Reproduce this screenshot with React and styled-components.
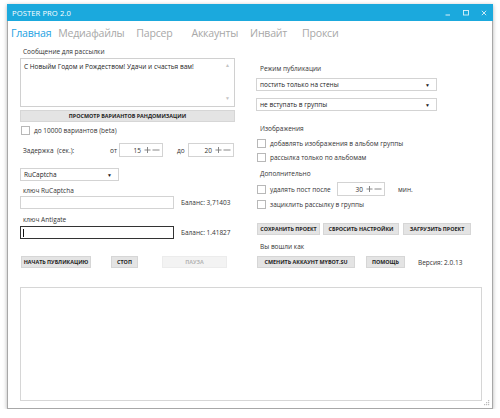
import React from "react";
import styled, { createGlobalStyle } from "styled-components";

const Global = createGlobalStyle`
  html, body { margin: 0; padding: 0; background: #ffffff; }
  body { font-family: "Open Sans", "Noto Sans", sans-serif; color: #333; }
  * { box-sizing: border-box; }
`;

const Window = styled.div`
  position: relative;
  margin: 4px 0 0 7px;
  width: 486px;
  height: 405px;
  background: #fff;
  border: 1px solid #a8a8a8;
  border-top: none;
  box-shadow: 0 1px 4px rgba(0, 0, 0, 0.3);
  display: flex;
  flex-direction: column;
`;

const TitleBar = styled.div`
  height: 17px;
  margin: 0 -1px;
  background: #1ba9dd;
  display: flex;
  align-items: center;
  padding: 0 6px 0 5px;
  color: #fff;
  font-size: 7.6px;
`;

const Title = styled.div`
  flex: 1;
  letter-spacing: 0.1px;
`;

const Controls = styled.div`
  display: flex;
  align-items: center;
  gap: 12px;
  opacity: 0.85;
`;

const Tabs = styled.div`
  height: 23px;
  display: flex;
  align-items: center;
  padding-left: 3px;
`;

const Tab = styled.div`
  font-size: 10.6px;
  letter-spacing: -0.25px;
  font-weight: 400;
  color: ${(p) => (p.$active ? "#1ba1e2" : "#a8a8a8")};
  margin-right: ${(p) => p.$gap}px;
  white-space: nowrap;
`;

const Main = styled.div`
  padding: 3px 10px 0 12px;
  display: grid;
  grid-template-columns: 215px 1fr;
  column-gap: 21px;
`;

const Column = styled.div`
  display: flex;
  flex-direction: column;
`;

const Label = styled.div`
  font-size: 6.5px;
  line-height: 10px;
  height: 10px;
  color: #333;
  padding-left: ${(p) => p.$indent ?? 3}px;
  margin-top: ${(p) => p.$mt || 0}px;
  white-space: nowrap;
`;

const TextArea = styled.div`
  position: relative;
  margin-top: 1px;
  height: 49px;
  border: 1px solid #d0d0d0;
  padding: 3px 3px;
  font-size: 6.5px;
  line-height: 9px;
  color: #222;
`;

const Scroll = styled.div`
  position: absolute;
  right: 4px;
  top: 4px;
  bottom: 5px;
  display: flex;
  flex-direction: column;
  justify-content: space-between;
  color: #c4c4c4;
  font-size: 5px;
  line-height: 5px;
`;

const Btn = styled.div`
  height: 12px;
  width: ${(p) => (p.$w ? `${p.$w}px` : "auto")};
  margin-left: ${(p) => p.$ml || 0}px;
  margin-top: ${(p) => p.$mt || 0}px;
  background: ${(p) => (p.$disabled ? "#f3f3f3" : "#e4e4e4")};
  border: 1px solid ${(p) => (p.$disabled ? "#ececec" : "#d6d6d6")};
  color: ${(p) => (p.$disabled ? "#b5b5b5" : "#222")};
  font-size: 5.4px;
  font-weight: 700;
  text-transform: uppercase;
  display: flex;
  align-items: center;
  justify-content: center;
  white-space: nowrap;
  flex-shrink: 0;
`;

const Row = styled.div`
  display: flex;
  align-items: center;
  height: ${(p) => p.$h || 10}px;
  margin-top: ${(p) => p.$mt || 0}px;
`;

const Box = styled.div`
  width: 9px;
  height: 9px;
  border: 1px solid #b8b8b8;
  background: #fff;
  margin-left: 1px;
  flex-shrink: 0;
`;

const Text = styled.div`
  font-size: 6.5px;
  color: #333;
  white-space: nowrap;
  margin-left: ${(p) => p.$ml || 0}px;
  width: ${(p) => (p.$w ? `${p.$w}px` : "auto")};
  padding-left: ${(p) => p.$pl || 0}px;
  flex-shrink: 0;
`;

const Spin = styled.div`
  width: ${(p) => p.$w}px;
  height: 14px;
  border: 1px solid #d3d3d3;
  display: flex;
  align-items: center;
  justify-content: flex-end;
  padding-right: 2px;
  font-size: 6.5px;
  color: #333;
  flex-shrink: 0;
  margin-left: ${(p) => p.$ml || 0}px;
`;

const SpinVal = styled.span`
  margin-right: 3px;
`;

const Select = styled.div`
  width: ${(p) => (p.$w ? `${p.$w}px` : "auto")};
  height: 13px;
  margin-top: ${(p) => p.$mt || 0}px;
  border: 1px solid #d3d3d3;
  display: flex;
  align-items: center;
  justify-content: space-between;
  padding: 0 6px 0 3px;
  font-size: 6.5px;
  color: #222;
`;

const Arrow = styled.span`
  font-size: 5px;
  color: #222;
`;

const Input = styled.div`
  width: 154px;
  height: 13px;
  border: 1px solid ${(p) => (p.$focus ? "#333" : "#d3d3d3")};
  display: flex;
  align-items: center;
  padding-left: 2px;
  flex-shrink: 0;
`;

const Caret = styled.div`
  width: 1px;
  height: 8px;
  background: #111;
`;

const Log = styled.div`
  margin: 19px 10px 0 12px;
  height: 114px;
  border: 1px solid #d6d6d6;
`;

const Grip = styled.svg`
  position: absolute;
  right: 2px;
  bottom: 2px;
`;

const PlusMinus = () => (
  <svg width="16" height="8" viewBox="0 0 16 8">
    <path d="M0.5 4H6.5M3.5 1V7" stroke="#7a7a7a" strokeWidth="0.9" />
    <path d="M8.5 4H15.5" stroke="#7a7a7a" strokeWidth="0.9" />
  </svg>
);

const tabs = [
  { t: "Главная", gap: 7, active: true },
  { t: "Медиафайлы", gap: 12 },
  { t: "Парсер", gap: 19 },
  { t: "Аккаунты", gap: 12 },
  { t: "Инвайт", gap: 15 },
  { t: "Прокси", gap: 0 },
];

export default function App() {
  return (
    <>
      <Global />
      <Window>
        <TitleBar>
          <Title>POSTER PRO 2.0</Title>
          <Controls>
            <svg width="6" height="6" viewBox="0 0 6 6">
              <path d="M0.5 5H5" stroke="#fff" strokeWidth="1" />
            </svg>
            <svg width="6" height="6" viewBox="0 0 6 6">
              <rect x="0.5" y="0.5" width="5" height="4.5" fill="none" stroke="#fff" strokeWidth="0.9" />
            </svg>
            <svg width="6" height="6" viewBox="0 0 6 6">
              <path d="M0.8 0.8L5.2 5.2M5.2 0.8L0.8 5.2" stroke="#fff" strokeWidth="0.9" />
            </svg>
          </Controls>
        </TitleBar>
        <Tabs>
          {tabs.map((x) => (
            <Tab key={x.t} $active={x.active} $gap={x.gap}>
              {x.t}
            </Tab>
          ))}
        </Tabs>
        <Main>
          <Column>
            <Label>Сообщение для рассылки</Label>
            <TextArea>
              С Новыйм Годом и Рождеством! Удачи и счастья вам!
              <Scroll>
                <span>▲</span>
                <span>▼</span>
              </Scroll>
            </TextArea>
            <Btn $mt={3}>Просмотр вариантов рандомизации</Btn>
            <Row $mt={4} $h={9}>
              <Box />
              <Text $ml={4}>до 10000 вариантов (beta)</Text>
            </Row>
            <Row $mt={8} $h={14}>
              <Text $w={90} $pl={3}>Задержка&nbsp; (сек.):</Text>
              <Text $w={9}>от</Text>
              <Spin $w={44}>
                <SpinVal>15</SpinVal>
                <PlusMinus />
              </Spin>
              <Text $ml={14} $w={11}>до</Text>
              <Spin $w={46}>
                <SpinVal>20</SpinVal>
                <PlusMinus />
              </Spin>
            </Row>
            <Select $mt={11} $w={99}>
              <span>RuCaptcha</span>
              <Arrow>▼</Arrow>
            </Select>
            <Label $mt={5}>ключ RuCaptcha</Label>
            <Row $h={13}>
              <Input />
              <Text $ml={7}>Баланс: 3,71403</Text>
            </Row>
            <Label $mt={6}>ключ Antigate</Label>
            <Row $h={13} $mt={1}>
              <Input $focus>
                <Caret />
              </Input>
              <Text $ml={7}>Баланс: 1.41827</Text>
            </Row>
            <Row $mt={17} $h={12}>
              <Btn $w={70} $ml={1}>Начать публикацию</Btn>
              <Btn $w={27} $ml={20}>Стоп</Btn>
              <Btn $w={65} $ml={24} $disabled>Пауза</Btn>
            </Row>
          </Column>
          <Column>
            <Label $mt={17} $indent={4}>Режим публикации</Label>
            <Select $mt={4} $w={181}>
              <span>постить только на стены</span>
              <Arrow>▼</Arrow>
            </Select>
            <Select $mt={7} $w={181}>
              <span>не вступать в группы</span>
              <Arrow>▼</Arrow>
            </Select>
            <Label $mt={13} $indent={4}>Изображения</Label>
            <Row $mt={4}>
              <Box />
              <Text $ml={4}>добавлять изображения в альбом группы</Text>
            </Row>
            <Row $mt={4}>
              <Box />
              <Text $ml={4}>рассылка только по альбомам</Text>
            </Row>
            <Label $mt={7} $indent={4}>Дополнительно</Label>
            <Row $mt={3} $h={14}>
              <Box />
              <Text $ml={4} $w={67}>удалять пост после</Text>
              <Spin $w={48}>
                <SpinVal>30</SpinVal>
                <PlusMinus />
              </Spin>
              <Text $ml={13}>мин.</Text>
            </Row>
            <Row $mt={3}>
              <Box />
              <Text $ml={4}>зациклить рассылку в группы</Text>
            </Row>
            <Row $mt={14} $h={12}>
              <Btn $w={63} $ml={1}>Сохранить проект</Btn>
              <Btn $w={76} $ml={3}>Сбросить настройки</Btn>
              <Btn $w={68} $ml={4}>Загрузить проект</Btn>
            </Row>
            <Label $mt={7} $indent={4}>Вы вошли как</Label>
            <Row $mt={4} $h={12}>
              <Btn $w={98} $ml={1}>Сменить аккаунт mybot.su</Btn>
              <Btn $w={39} $ml={11}>Помощь</Btn>
              <Text $ml={13}>Версия: 2.0.13</Text>
            </Row>
          </Column>
        </Main>
        <Log />
        <Grip width="6" height="6" viewBox="0 0 6 6">
          <rect x="4" y="0" width="1.2" height="1.2" fill="#bbb" />
          <rect x="2" y="2" width="1.2" height="1.2" fill="#bbb" />
          <rect x="4" y="2" width="1.2" height="1.2" fill="#bbb" />
          <rect x="0" y="4" width="1.2" height="1.2" fill="#bbb" />
          <rect x="2" y="4" width="1.2" height="1.2" fill="#bbb" />
          <rect x="4" y="4" width="1.2" height="1.2" fill="#bbb" />
        </Grip>
      </Window>
    </>
  );
}
